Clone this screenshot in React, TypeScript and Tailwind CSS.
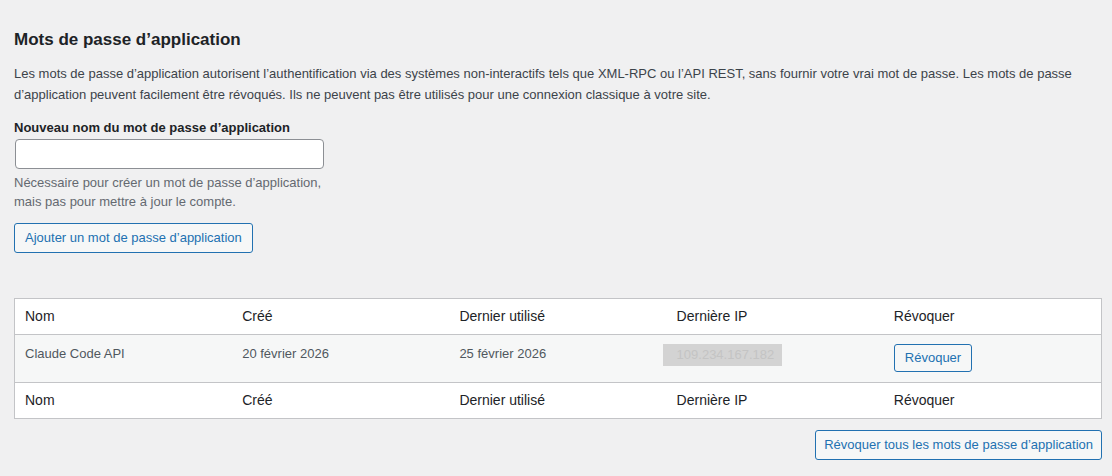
const columns = ['Nom', 'Créé', 'Dernier utilisé', 'Dernière IP', 'Révoquer'];

const HeaderRow = ({ top }: { top?: boolean }) => (
  <div
    className={`grid h-[36px] grid-cols-5 items-center bg-white text-[14px] text-[#1d2327] ${
      top ? 'border-b border-[#c3c4c7]' : 'border-t border-[#c3c4c7]'
    }`}
  >
    {columns.map((col) => (
      <div key={col} className="px-[10px]">
        {col}
      </div>
    ))}
  </div>
);

const App = () => {
  return (
    <div
      className="min-h-[476px] bg-[#f0f0f1] pt-[29px] pr-[10px] pl-[14px] text-[13px] text-[#3c434a]"
      style={{ fontFamily: '"Liberation Sans", Arial, sans-serif' }}
    >
      {/* 제목 */}
      <h2 className="text-[17px] leading-[22px] font-semibold text-[#1d2327]">
        Mots de passe d’application
      </h2>

      <p className="mt-[12px] leading-[21px]">
        Les mots de passe d’application autorisent l’authentification via des systèmes non-interactifs tels
        que XML-RPC ou l’API REST, sans fournir votre vrai mot de passe. Les mots de passe d’application
        peuvent facilement être révoqués. Ils ne peuvent pas être utilisés pour une connexion classique à
        votre site.
      </p>

      {/* 새 비밀번호 입력 */}
      <div className="mt-[14px]">
        <label className="block text-[13px] leading-[18px] font-semibold text-[#1d2327]">
          Nouveau nom du mot de passe d’application
        </label>
        <input
          type="text"
          className="mt-[2px] ml-px h-[30px] w-[309px] rounded-[4px] border border-[#8c8f94] bg-white px-2 outline-none"
        />
        <p className="mt-[4px] w-[310px] leading-[19px] text-[#646970]">
          Nécessaire pour créer un mot de passe d’application, mais pas pour mettre à jour le compte.
        </p>
        <button className="mt-[12px] h-[30px] rounded-[3px] border border-[#2271b1] bg-[#f6f7f7] px-[10px] text-[13px] text-[#2271b1]">
          Ajouter un mot de passe d’application
        </button>
      </div>

      {/* 목록 테이블 */}
      <div className="mt-[45px] border border-[#c3c4c7]">
        <HeaderRow top />
        <div className="grid h-[47px] grid-cols-5 bg-[#f6f7f7] pt-[9px] text-[13px] text-[#50575e]">
          <div className="px-[10px] leading-[19px]">Claude Code API</div>
          <div className="px-[10px] leading-[19px]">20 février 2026</div>
          <div className="px-[10px] leading-[19px]">25 février 2026</div>
          <div className="px-[10px]">
            <span className="-ml-[14px] inline-block h-[22px] bg-[#d3d3d3] pr-[8px] pl-[14px] leading-[22px] text-[#c4c4c4]">
              109.234.167.182
            </span>
          </div>
          <div className="px-[10px]">
            <button className="h-[28px] rounded-[3px] border border-[#2271b1] bg-[#f6f7f7] px-[10px] text-[13px] text-[#2271b1]">
              Révoquer
            </button>
          </div>
        </div>
        <HeaderRow />
      </div>

      <div className="mt-[11px] flex justify-end">
        <button className="h-[30px] rounded-[3px] border border-[#2271b1] bg-[#f6f7f7] px-[8px] text-[13px] text-[#2271b1]">
          Révoquer tous les mots de passe d’application
        </button>
      </div>
    </div>
  );
};

export default App;
